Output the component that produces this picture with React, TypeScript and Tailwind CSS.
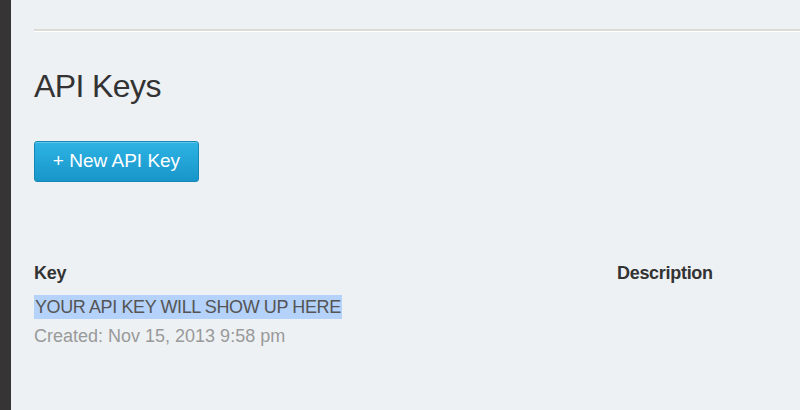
export default function App() {
  return (
    <div className="flex h-[410px] w-[800px] overflow-hidden font-['Liberation_Sans',Arial,sans-serif]">
      {/* left rail */}
      <div className="w-[11px] shrink-0 bg-[#363434]" />

      <main className="flex-1 bg-[#edf1f4] pl-[23px]">
        <div className="h-[31px] border-b-2 border-[#dcdcd6] shadow-[0_1px_0_#ffffff]" />

        <h1 className="mt-[35px] text-[32px] leading-[40px] tracking-[-0.6px] text-[#333333]">API Keys</h1>

        <button className="mt-[35px] h-[41px] w-[165px] rounded-[3px] border border-[#1886b4] bg-gradient-to-b from-[#2db3e4] to-[#1896c9] text-[19px] text-white shadow-[inset_0_1px_0_rgba(255,255,255,0.25)]">
          + New API Key
        </button>

        <div className="mt-[79px] grid grid-cols-[583px_1fr]">
          <div className="text-[18px] font-bold leading-[24px] tracking-[-0.3px] text-[#333333]">Key</div>
          <div className="text-[18px] font-bold leading-[24px] tracking-[-0.3px] text-[#333333]">Description</div>

          <div className="col-span-2 mt-[10px]">
            <span className="inline-block bg-[#b4d2fa] px-[1px] text-[18px] leading-[24px] tracking-[-0.4px] text-[#555555]">
              YOUR API KEY WILL SHOW UP HERE
            </span>
            <p className="mt-[4px] text-[18px] leading-[24px] text-[#999999]">Created: Nov 15, 2013 9:58 pm</p>
          </div>
        </div>
      </main>
    </div>
  );
}
